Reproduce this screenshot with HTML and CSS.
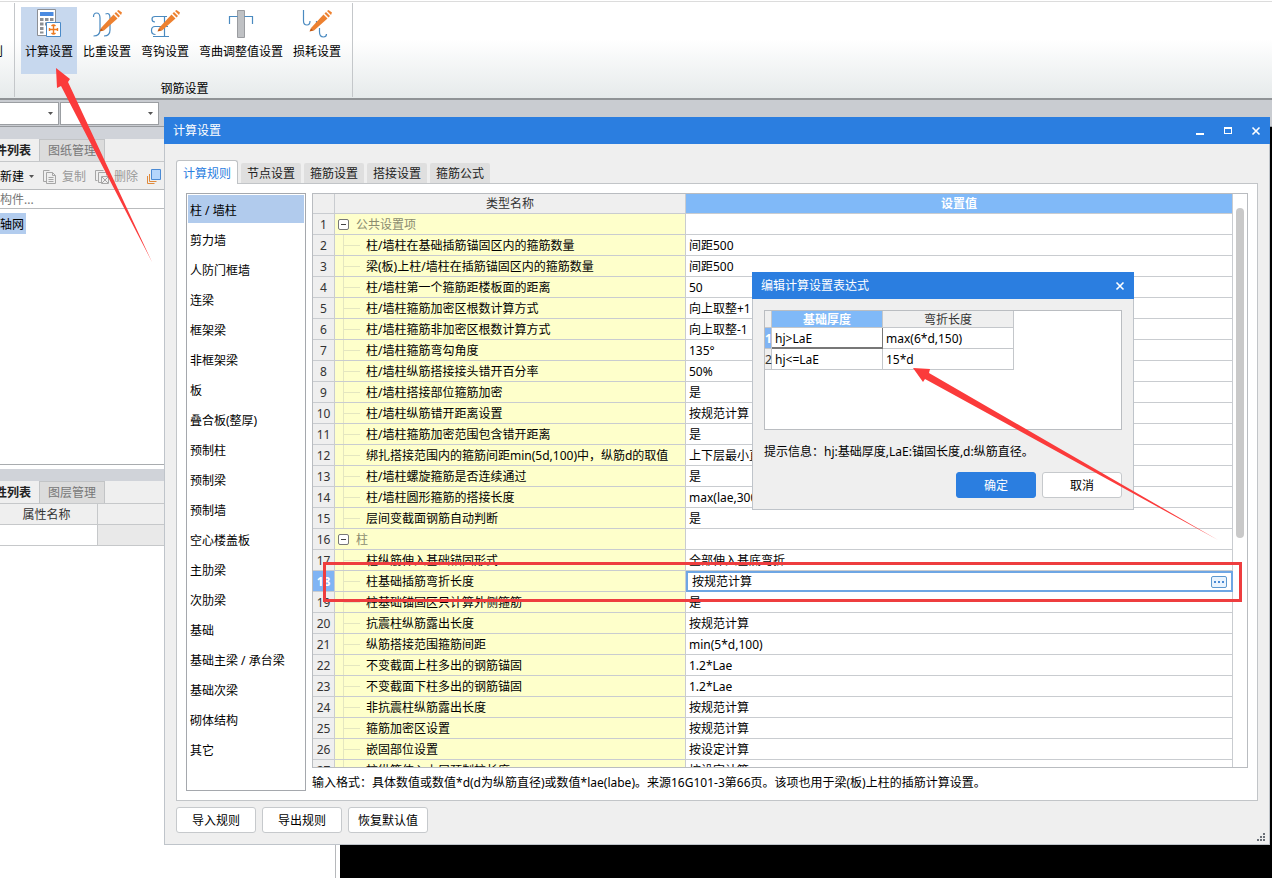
FILE: index.html
```html
<!DOCTYPE html>
<html lang="zh-CN">
<head>
<meta charset="utf-8">
<title>计算设置</title>
<link rel="stylesheet" href="styles.css">
</head>
<body>
<svg class="defs" aria-hidden="true">
  <symbol id="pencil" viewBox="0 0 30 30">
    <path d="M9 19L21.500 5.500l4 4L12 21.500z" fill="#ed8130"/>
    <path d="M22.500 4.500l1.500-1.500 4 4-1.500 1.500zM25 2l1.500-1L30 3.500 29 6z" fill="#ed8130"/>
    <path d="M7.500 22.500L9 19l3 2.500z" fill="#c65a12"/>
  </symbol>
</svg>
<div class="app">
  <header class="ribbon">
    <div class="ribbon-prev"><span>规则</span></div>
    <section class="ribbon-group">
      <div class="ribbon-items">
        <button class="tool tool-active">
          <svg viewBox="0 0 30 30" class="tool-icon"><path d="M3.500.500h18v26h-18z" fill="#fff" stroke="#8c8f94"/><path d="M6 3h13.500v4H6z" fill="#4a8ae0"/><path d="M6 9h3.500v3H6zm5 0h3.500v3H11zm5 0h3.500v3H16zM6 13.500h3.500v3H6zm5 0h3.500v3H11zM6 18h3.500v3H6zM6 22.500h3.500v2H6z" fill="#8c8f94"/><path d="M12.500 13.500h14v14h-14z" fill="#fff" stroke="#4a8ac8"/><path d="M19.500 16v9M15 20.500h9M17.500 17q2-2 4 0M17.500 24q2 2 4 0M15.500 19v3M23.500 19v3" fill="none" stroke="#ed7a20" stroke-width="1.400"/></svg>
          <span>计算设置</span>
        </button>
        <button class="tool">
          <svg viewBox="0 0 30 30" class="tool-icon"><path d="M1.500 8q0-4 3-4 3.500 0 3.500 5v12q0 6-6.500 6M13.500 5q4.500-2 4.500 4v12q0 6-6 6" fill="none" stroke="#4a8ac0" stroke-width="1.200"/><use href="#pencil"/></svg>
          <span>比重设置</span>
        </button>
        <button class="tool">
          <svg viewBox="0 0 30 30" class="tool-icon"><path d="M17 7.500H5q-3 0-3 2.500 0 3 3 3M11 17.500H5q-3.500 0-3.500 4 0 4 4 4M14.500 7.500v20M3 27.500h16M12 17.500h6" fill="none" stroke="#4a8ac0" stroke-width="1.200"/><use href="#pencil"/></svg>
          <span>弯钩设置</span>
        </button>
        <button class="tool">
          <svg viewBox="0 0 30 30" class="tool-icon"><path d="M11.500 1.500h7v27h-7z" fill="#bfc1c4" stroke="#9a9ca0"/><path d="M3.500 15V7.500h8M18.500 7.500h8V15" fill="none" stroke="#4a8ac0" stroke-width="1.200"/></svg>
          <span>弯曲调整值设置</span>
        </button>
        <button class="tool">
          <svg viewBox="0 0 30 30" class="tool-icon"><path d="M1.500 1v11q0 4 3.500 4 3 0 3-4M14.500 12v4M17.500 19v4q0 5 4 5 3 0 3-3" fill="none" stroke="#4a8ac0" stroke-width="1.200"/><use href="#pencil"/></svg>
          <span>损耗设置</span>
        </button>
      </div>
      <div class="ribbon-title">钢筋设置</div>
    </section>
  </header>
  <div class="filters">
    <label class="drop drop-a"><select aria-label="楼层"><option></option></select></label>
    <label class="drop drop-b"><select aria-label="构件类型"><option></option></select></label>
  </div>
  <main class="workspace">
    <aside class="side">
      <div class="splitter"></div>
      <nav class="side-tabs">
        <button class="side-tab side-tab-on">构件列表</button>
        <button class="side-tab">图纸管理</button>
      </nav>
      <div class="side-tools">
        <button class="mini mini-new">新建<i class="caret"></i></button>
        <button class="mini mini-copy" disabled><svg viewBox="0 0 14 16"><path d="M3.500 12.500h-3v-11h6M3.500 3.500h6l3 3v8h-9zM9.500 3.500v3h3M5.500 8.500h5M5.500 10.500h5M5.500 12.500h5" fill="none" stroke="#a6a6a6"/></svg><span>复制</span></button>
        <button class="mini mini-del" disabled><svg viewBox="0 0 14 16"><path d="M2.500 11.500h-2v-10h8M6.500 13.500h-3v-10h8v3M7 8l6 6M13 8l-6 6M6.500 7.500h7v7h-7z" fill="none" stroke="#a6a6a6"/></svg><span>删除</span></button>
        <button class="mini" aria-label="层间复制"><svg viewBox="0 0 14 16"><path d="M.5 7v7.500h7M2.500 5v7.500h7" fill="none" stroke="#e08a3c"/><path d="M4.500 .5h9v10h-9z" fill="#b4d5fb" stroke="#4a8ad4"/></svg></button>
      </div>
      <div class="search"><input type="text" value="搜索构件..." aria-label="搜索构件"></div>
      <div class="tree"><button class="tree-node">轴网</button></div>
      <div class="splitter splitter-low"></div>
      <nav class="side-tabs">
        <button class="side-tab side-tab-on">属性列表</button>
        <button class="side-tab">图层管理</button>
      </nav>
      <table class="props">
        <tr><th>属性名称</th><th></th></tr>
        <tr><td></td><td class="dim"></td></tr>
      </table>
    </aside>
    <div class="canvas"></div>
  </main>
</div>

<section class="window settings" aria-label="计算设置">
  <header class="titlebar">
    <h1>计算设置</h1>
    <button class="win-btn" aria-label="最小化"><svg viewBox="0 0 10 10"><path d="M1 7h8v2H1z" fill="#fff"/></svg></button>
    <button class="win-btn" aria-label="最大化"><svg viewBox="0 0 10 10"><path d="M1 1h8v7H1zm1 2v4h6V3z" fill="#fff" fill-rule="evenodd"/></svg></button>
    <button class="win-btn" aria-label="关闭"><svg viewBox="0 0 10 10"><path d="M1.500 1.500l7 7M8.500 1.500l-7 7" stroke="#fff" stroke-width="1.600"/></svg></button>
  </header>
  <nav class="tabs">
    <button class="tab tab-on">计算规则</button>
    <button class="tab">节点设置</button>
    <button class="tab">箍筋设置</button>
    <button class="tab">搭接设置</button>
    <button class="tab">箍筋公式</button>
  </nav>
  <div class="panel">
    <div class="kinds">
      <button class="kind kind-on">柱 / 墙柱</button>
      <button class="kind">剪力墙</button>
      <button class="kind">人防门框墙</button>
      <button class="kind">连梁</button>
      <button class="kind">框架梁</button>
      <button class="kind">非框架梁</button>
      <button class="kind">板</button>
      <button class="kind">叠合板(整厚)</button>
      <button class="kind">预制柱</button>
      <button class="kind">预制梁</button>
      <button class="kind">预制墙</button>
      <button class="kind">空心楼盖板</button>
      <button class="kind">主肋梁</button>
      <button class="kind">次肋梁</button>
      <button class="kind">基础</button>
      <button class="kind">基础主梁 / 承台梁</button>
      <button class="kind">基础次梁</button>
      <button class="kind">砌体结构</button>
      <button class="kind">其它</button>
    </div>
    <div class="detail">
      <div class="grid">
        <div class="grid-view">
          <table class="rules">
            <thead><tr><th class="no"></th><th class="name">类型名称</th><th class="val">设置值</th></tr></thead>
            <tbody>
              <tr class="group"><th>1</th><td><button class="fold" aria-label="折叠"></button>公共设置项</td><td></td></tr>
              <tr><th>2</th><td>柱/墙柱在基础插筋锚固区内的箍筋数量</td><td>间距500</td></tr>
              <tr><th>3</th><td>梁(板)上柱/墙柱在插筋锚固区内的箍筋数量</td><td>间距500</td></tr>
              <tr><th>4</th><td>柱/墙柱第一个箍筋距楼板面的距离</td><td>50</td></tr>
              <tr><th>5</th><td>柱/墙柱箍筋加密区根数计算方式</td><td>向上取整+1</td></tr>
              <tr><th>6</th><td>柱/墙柱箍筋非加密区根数计算方式</td><td>向上取整-1</td></tr>
              <tr><th>7</th><td>柱/墙柱箍筋弯勾角度</td><td>135°</td></tr>
              <tr><th>8</th><td>柱/墙柱纵筋搭接接头错开百分率</td><td>50%</td></tr>
              <tr><th>9</th><td>柱/墙柱搭接部位箍筋加密</td><td>是</td></tr>
              <tr><th>10</th><td>柱/墙柱纵筋错开距离设置</td><td>按规范计算</td></tr>
              <tr><th>11</th><td>柱/墙柱箍筋加密范围包含错开距离</td><td>是</td></tr>
              <tr><th>12</th><td>绑扎搭接范围内的箍筋间距min(5d,100)中，纵筋d的取值</td><td>上下层最小直径</td></tr>
              <tr><th>13</th><td>柱/墙柱螺旋箍筋是否连续通过</td><td>是</td></tr>
              <tr><th>14</th><td>柱/墙柱圆形箍筋的搭接长度</td><td>max(lae,300)</td></tr>
              <tr><th>15</th><td>层间变截面钢筋自动判断</td><td>是</td></tr>
              <tr class="group"><th>16</th><td><button class="fold" aria-label="折叠"></button>柱</td><td></td></tr>
              <tr><th>17</th><td>柱纵筋伸入基础锚固形式</td><td>全部伸入基底弯折</td></tr>
              <tr class="current"><th>18</th><td>柱基础插筋弯折长度</td><td class="edit"><div class="editor"><input type="text" value="按规范计算" aria-label="柱基础插筋弯折长度"><button class="more" aria-label="编辑"><i></i><i></i><i></i></button></div></td></tr>
              <tr><th>19</th><td>柱基础锚固区只计算外侧箍筋</td><td>是</td></tr>
              <tr><th>20</th><td>抗震柱纵筋露出长度</td><td>按规范计算</td></tr>
              <tr><th>21</th><td>纵筋搭接范围箍筋间距</td><td>min(5*d,100)</td></tr>
              <tr><th>22</th><td>不变截面上柱多出的钢筋锚固</td><td>1.2*Lae</td></tr>
              <tr><th>23</th><td>不变截面下柱多出的钢筋锚固</td><td>1.2*Lae</td></tr>
              <tr><th>24</th><td>非抗震柱纵筋露出长度</td><td>按规范计算</td></tr>
              <tr><th>25</th><td>箍筋加密区设置</td><td>按规范计算</td></tr>
              <tr><th>26</th><td>嵌固部位设置</td><td>按设定计算</td></tr>
              <tr><th>27</th><td>柱纵筋伸入上层预制柱长度</td><td>按设定计算</td></tr>
            </tbody>
          </table>
        </div>
        <div class="scroll"><div class="thumb"></div></div>
      </div>
      <p class="hint">输入格式<span class="colon">：</span>具体数值或数值*d(d为纵筋直径)或数值*lae(labe)。来源16G101-3第66页。该项也用于梁(板)上柱的插筋计算设置。</p>
    </div>
  </div>
  <footer class="actions">
    <button class="btn">导入规则</button>
    <button class="btn">导出规则</button>
    <button class="btn">恢复默认值</button>
    <svg class="grip" viewBox="0 0 9 9"><path d="M6 0h2v2H6zM3 3h2v2H3zm3 0h2v2H6zM0 6h2v2H0zm3 0h2v2H3zm3 0h2v2H6z" fill="#6a7078"/></svg>
  </footer>
</section>

<section class="window expr" aria-label="编辑计算设置表达式">
  <header class="titlebar">
    <h1>编辑计算设置表达式</h1>
    <button class="win-btn" aria-label="关闭"><svg viewBox="0 0 10 10"><path d="M1.500 1.500l7 7M8.500 1.500l-7 7" stroke="#fff" stroke-width="1.600"/></svg></button>
  </header>
  <div class="expr-body">
    <div class="expr-view">
      <table class="expr-table">
        <thead><tr><th class="e-no"></th><th class="e-a">基础厚度</th><th class="e-b">弯折长度</th></tr></thead>
        <tbody>
          <tr><th class="e-cur">1</th><td class="e-focus">hj&gt;LaE</td><td>max(6*d,150)</td></tr>
          <tr><th>2</th><td>hj&lt;=LaE</td><td>15*d</td></tr>
        </tbody>
      </table>
    </div>
    <p class="expr-hint">提示信息<span class="colon">：</span>hj:基础厚度,LaE:锚固长度,d:纵筋直径。</p>
    <div class="expr-actions">
      <button class="btn btn-primary">确定</button>
      <button class="btn">取消</button>
    </div>
  </div>
</section>

<svg class="marks" width="1272" height="878" viewBox="0 0 1272 878" aria-hidden="true">
  <path d="M56 68L70 79 68 82 152 262 61 86 57 88z" fill="#fb3b3b"/>
  <path d="M913 368L930 369 929 373 1218 540 925 379 923 382z" fill="#fb3b3b"/>
  <path d="M324.500 563.500h916v37h-916z" fill="none" stroke="#ee3d3f" stroke-width="3"/>
</svg>
</body>
</html>
```

FILE: styles.css
```css
* { box-sizing: border-box; }

html, body {
  height: 100%;
  margin: 0;
  overflow: hidden;
}

body, button, input, select {
  font-family: "Noto Sans", "Noto Sans CJK SC", sans-serif;
  font-size: 12px;
  line-height: 18px;
  color: #000;
}

button {
  margin: 0;
  padding: 0;
  border: 0;
  background: none;
  white-space: nowrap;
}

h1, p { margin: 0; font-size: 12px; font-weight: normal; }
table { border-collapse: separate; border-spacing: 0; }
.defs { position: absolute; width: 0; height: 0; }
.colon { font-family: "Noto Sans CJK TC", sans-serif; line-height: 1; }

/* main application */
.app {
  display: flex;
  flex-direction: column;
  height: 100%;
  background: #fff;
}

.ribbon {
  display: flex;
  height: 100px;
  padding-top: 3px;
  border-bottom: 2px solid #909396;
  background: linear-gradient(#fff 0 1px, #dcdcdc 1px 2px, #fff 2px 40%, #e6eaeb);
  flex: none;
}

.ribbon-prev {
  display: flex;
  justify-content: flex-end;
  width: 15px;
  height: 94px;
  padding: 40px 11px 0 0;
  overflow: hidden;
  white-space: nowrap;
  border-right: 1px solid #c4c7ca;
}

.ribbon-group {
  height: 94px;
  padding: 4px 7px 0 6px;
  border-right: 1px solid #c4c7ca;
}

.ribbon-items { display: flex; gap: 2px; }

.tool {
  display: flex;
  flex-direction: column;
  align-items: center;
  height: 67px;
  padding: 2px 4px 0;
}

.tool-active { background: #c7d8ee; }
.tool-icon { width: 30px; height: 30px; }
.tool span { margin-top: 4px; }
.ribbon-title { margin-top: 6px; padding-left: 3px; text-align: center; }

.filters {
  display: flex;
  gap: 1px;
  height: 27px;
  padding-top: 2px;
  background: #c9ccd1;
  border-bottom: 1px solid #96999d;
  flex: none;
}

.drop {
  position: relative;
  height: 23px;
  background: #fff;
  border: 1px solid #9b9ea2;
}
.drop-a { width: 59px; border-left: 0; }
.drop-b { width: 99px; }
.drop select {
  width: 100%;
  height: 100%;
  border: 0;
  background: none;
  appearance: none;
}
.drop::after, .caret {
  content: "";
  width: 5px;
  height: 3px;
  background: #555;
  clip-path: polygon(0 0, 100% 0, 50% 100%);
}
.drop::after { position: absolute; right: 5px; top: 9px; }

.workspace { display: flex; gap: 4px; flex: 1; min-height: 0; }
.side { width: 336px; border-right: 1px solid #b6b8bb; }
.canvas { flex: 1; background: #000; }

.splitter { height: 12px; background: #d0d3d9; }
.splitter-low { margin-top: 4px; }

.side-tabs {
  display: flex;
  height: 23px;
  background: #efefef;
  border-bottom: 1px solid #c6c8ca;
}
.side-tab {
  width: 66px;
  padding-top: 1px;
  background: #dcdcdc;
  border: 1px solid #c2c4c6;
  border-bottom: 0;
  color: #777;
}
.side-tab-on {
  display: flex;
  justify-content: flex-end;
  align-items: center;
  width: 39px;
  padding: 2px 8px 0 0;
  overflow: hidden;
  background: none;
  border: 0;
  color: #222;
  font-weight: bold;
}

.side-tools {
  display: flex;
  align-items: center;
  gap: 9px;
  height: 28px;
  padding-top: 2px;
  background: #efefef;
  border-bottom: 1px solid #b9bbbd;
}
.mini { display: flex; align-items: center; gap: 5px; }
.mini svg { width: 14px; height: 16px; }
.mini:disabled { color: #999; }

.search {
  height: 19px;
  overflow: hidden;
  border-bottom: 1px solid #b9bbbd;
}
.search input {
  width: 200px;
  height: 18px;
  margin-left: -24px;
  padding: 2px 0 0;
  border: 0;
  color: #777;
}

.tree {
  height: 256px;
  padding-top: 4px;
  border-bottom: 1px solid #a9acaf;
}
.tree-node { width: 26px; height: 21px; padding: 2px 4px 0 0; background: #b2ccee; }

.props { width: 100%; table-layout: fixed; }
.props th, .props td {
  height: 21px;
  padding: 2px 0 0;
  background: #efefef;
  border-right: 1px solid #c6c8ca;
  border-bottom: 1px solid #c6c8ca;
  font-weight: normal;
  color: #333;
}
.props th:first-child { width: 98px; padding-right: 4px; }
.props td { background: #fff; }
.props .dim { background: #e9e9e9; }

/* windows */
.window {
  position: absolute;
  display: flex;
  flex-direction: column;
  background: #efefef;
  border: 1px solid #bfc4ca;
  border-top: 0;
}
.settings { left: 164px; right: 2px; top: 117px; bottom: 33px; }
.expr { left: 752px; top: 272px; width: 382px; }

.titlebar {
  display: flex;
  align-items: center;
  gap: 18px;
  height: 27px;
  margin: 0 -1px;
  padding: 0 9px;
  background: #2b7ee0;
  flex: none;
}
.titlebar h1 { flex: 1; color: #fff; }
.win-btn { width: 10px; height: 10px; }
.win-btn svg { display: block; width: 10px; height: 10px; }

.tabs {
  display: flex;
  align-items: flex-end;
  gap: 3px;
  height: 39px;
  padding-left: 11px;
  flex: none;
}
.tab {
  width: 60px;
  height: 20px;
  padding-top: 2px;
  background: #dfdfdf;
  border-radius: 2px 2px 0 0;
  color: #222;
}
.tab-on {
  position: relative;
  width: 62px;
  height: 24px;
  margin-bottom: -1px;
  background: #fff;
  border: 1px solid #bfc2c5;
  border-bottom: 0;
  border-radius: 3px 3px 0 0;
  color: #2b7ee0;
}

.panel {
  display: flex;
  flex: 1;
  gap: 6px;
  min-height: 0;
  margin: 0 11px;
  padding: 9px;
  background: #fff;
  border: 1px solid #c2c5c8;
}

.kinds {
  display: flex;
  flex-direction: column;
  gap: 2px;
  width: 120px;
  padding: 1px;
  border: 1px solid #a5a8ad;
}
.kind { height: 28px; padding: 3px 0 0 2px; text-align: left; }
.kind-on { background: #b1cbed; }

.detail { display: flex; flex-direction: column; flex: 1; min-width: 0; }
.grid {
  display: flex;
  flex: 1;
  min-height: 0;
  border: 1px solid #b9bcc0;
}
.grid-view { flex: 1; overflow: hidden; }
.scroll { width: 14px; padding: 14px 2px 0 3px; }
.thumb { width: 8px; height: 59%; border-radius: 4px; background: #c9c9c9; }

.rules { width: 100%; table-layout: fixed; }
.rules th, .rules td {
  height: 21px;
  padding: 2px 0 0;
  border-right: 1px solid #c9ccd0;
  border-bottom: 1px solid #c9ccd0;
  font-weight: normal;
  text-align: left;
  white-space: nowrap;
}
.rules thead th {
  height: 20px;
  padding-top: 1px;
  background: #efefef;
  color: #333;
  text-align: center;
}
.rules thead .no { width: 22px; }
.rules thead .name { width: 351px; }
.rules thead .val { background: #80b9f8; color: #fff; font-weight: bold; }
.rules tbody th { background: #efefef; color: #333; text-align: center; }
.rules tbody td:nth-child(2) {
  padding-left: 31px;
  background:
    linear-gradient(#e4e6c0, #e4e6c0) 8px 0 / 1px 100% no-repeat,
    linear-gradient(#e4e6c0, #e4e6c0) 8px 10px / 17px 1px no-repeat,
    #feffcb;
}
.rules tbody td:nth-child(3) { padding-left: 3px; }
.rules tbody .group td:nth-child(2) {
  padding-left: 3px;
  background: #feffcb;
  color: #8b8c70;
}
.rules tbody .current th { background: #80b4f4; color: #fff; font-weight: bold; }
.rules tbody .current .edit { padding: 0; border: 0; }

.fold {
  width: 11px;
  height: 11px;
  margin-right: 7px;
  vertical-align: 0;
  border: 1px solid #777;
  border-radius: 2px;
  background: linear-gradient(#444, #444) center / 5px 1px no-repeat #fff;
}

.editor {
  display: flex;
  align-items: center;
  height: 21px;
  padding: 0 4px;
  border: 2px solid #6ea6e4;
}
.editor input {
  flex: 1;
  min-width: 0;
  height: 17px;
  padding: 0;
  border: 0;
  outline: 0;
}
.more {
  display: flex;
  align-items: center;
  justify-content: center;
  gap: 2px;
  width: 16px;
  height: 12px;
  border: 1px solid #5d98cf;
  border-radius: 2px;
  background: #eaf4fe;
}
.more i { width: 2px; height: 2px; background: #4a8ad4; }

.hint { height: 23px; padding-top: 6px; white-space: nowrap; }

.actions {
  display: flex;
  gap: 6px;
  padding: 6px 3px 11px 11px;
  flex: none;
}
.btn {
  width: 80px;
  height: 26px;
  padding-top: 2px;
  background: #fff;
  border: 1px solid #c6c9cc;
  border-radius: 3px;
}
.btn-primary { background: #2b7ee0; border-color: #2b7ee0; color: #fff; }
.grip { width: 9px; height: 9px; margin: 26px 0 -9px auto; }

/* expression editor */
.expr-body { padding: 11px; }
.expr-view {
  height: 120px;
  background: #fff;
  border: 1px solid #babdc1;
}
.expr-table { width: 249px; table-layout: fixed; }
.expr-table th, .expr-table td {
  height: 21px;
  padding: 2px 0 0;
  border-right: 1px solid #c4c7cb;
  border-bottom: 1px solid #c4c7cb;
  font-weight: normal;
  line-height: 16px;
  text-align: center;
  background: #efefef;
  color: #333;
}
.expr-table thead th { height: 17px; line-height: 14px; }
.expr-table .e-no { width: 7px; }
.expr-table .e-a { width: 111px; background: #80b9f8; color: #fff; font-weight: bold; }
.expr-table td { padding-left: 3px; background: #fff; color: #000; text-align: left; }
.expr-table .e-cur { background: #80b4f4; color: #fff; font-weight: bold; }
.expr-table .e-focus { border-right: 1px solid #777; border-bottom: 2px solid #777; }
.expr-hint { margin-top: 13px; }
.expr-actions {
  display: flex;
  justify-content: flex-end;
  gap: 6px;
  margin-top: 11px;
}

/* annotations drawn over everything */
.marks { position: absolute; left: 0; top: 0; pointer-events: none; }
```
